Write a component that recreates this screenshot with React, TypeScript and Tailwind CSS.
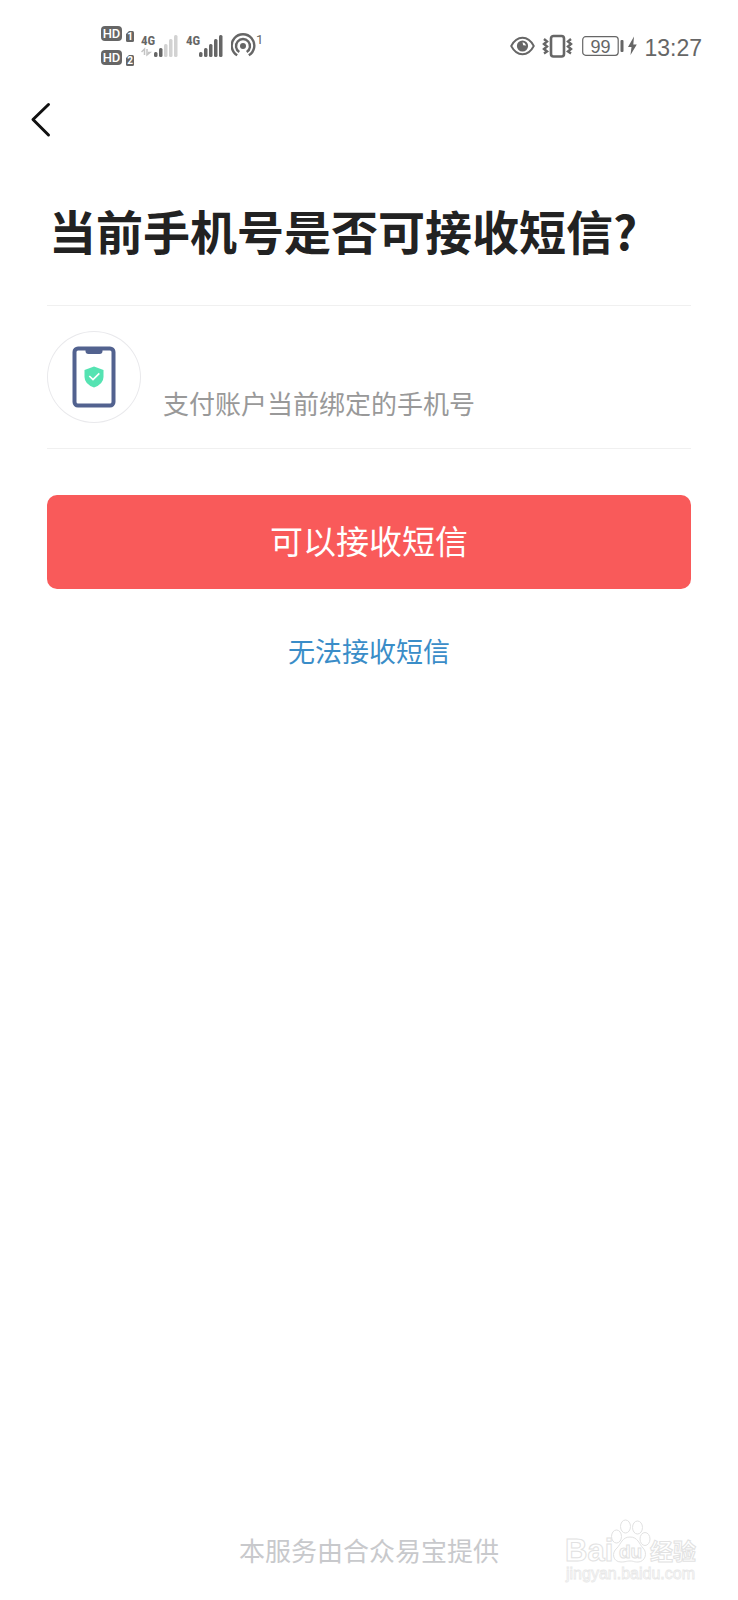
import React from "react";

const INK = "#666666";

function HdBadge({ sim }: { sim: string }) {
  return (
    <svg width="33" height="16" viewBox="0 0 33 16" role="img" aria-label={`HD ${sim}`}>
      <rect x="0" y="0" width="21" height="15" rx="4" fill={INK} />
      <text x="10.5" y="12" textAnchor="middle" fontSize="13" fontWeight="500" fontFamily="Roboto, sans-serif" fill="#fff">
        HD
      </text>
      <path d="M25 8 L28 5 H31.5 Q33 5 33 6.5 V14.5 Q33 16 31.5 16 H26.5 Q25 16 25 14.5 Z" fill={INK} />
      <text x="29" y="14" textAnchor="middle" fontSize="10" fontWeight="700" fontFamily="Roboto, sans-serif" fill="#fff">
        {sim}
      </text>
    </svg>
  );
}

function Signal({ strength, data }: { strength: number; data?: boolean }) {
  const heights = [5, 9, 13, 18, 22];
  return (
    <svg width="38" height="28" viewBox="0 0 38 28" role="img" aria-label="4G">
      <text x="0" y="13" fontSize="13" fontWeight="700" fontFamily="'Liberation Sans Narrow', 'Roboto Condensed', sans-serif" fill={INK}>
        4G
      </text>
      {data && (
        <path d="M0.5 20 L3.5 17 V23 M6 17 V23 L9 20.5 H7" fill="none" stroke="#c4c4c4" strokeWidth="1.5" />
      )}
      {heights.map((h, i) => (
        <rect key={h} x={13 + i * 5} y={25 - h} width="3.5" height={h} rx="1.5" fill={i < strength ? INK : "#d2d2d2"} />
      ))}
    </svg>
  );
}

function Hotspot() {
  return (
    <svg width="34" height="26" viewBox="0 0 34 26" role="img" aria-label="1">
      <circle cx="12" cy="13" r="3" fill={INK} />
      <path d="M8.3 19 A7 7 0 1 1 15.7 19" fill="none" stroke={INK} strokeWidth="2.4" />
      <path d="M6.2 22.3 A11.3 11.3 0 1 1 17.8 22.3" fill="none" stroke={INK} strokeWidth="2.4" />
      <text x="25" y="11" fontSize="13" fontFamily="Roboto, sans-serif" fill={INK}>
        1
      </text>
    </svg>
  );
}

function StatusBar() {
  return (
    <header className="flex h-[92px] items-center justify-between pl-[101px] pr-9">
      <div className="flex items-center gap-[7px]">
        <div className="flex flex-col gap-2">
          <HdBadge sim="1" />
          <HdBadge sim="2" />
        </div>
        <Signal strength={2} data />
        <Signal strength={5} />
        <Hotspot />
      </div>
      <div className="flex items-center gap-[7px]">
        <svg width="25" height="20" viewBox="0 0 25 20" aria-hidden="true">
          <path d="M1.2 10 C7 -1 18 -1 23.8 10 C18 21 7 21 1.2 10 Z" fill="none" stroke={INK} strokeWidth="1.9" strokeLinejoin="round" />
          <circle cx="12.5" cy="10" r="5.6" fill={INK} />
          <path d="M12.5 6.2 L13.2 9.2 L16.2 9.5 L14.5 7 Z" fill="#fff" />
        </svg>
        <svg width="31" height="24" viewBox="0 0 31 24" aria-hidden="true">
          <rect x="9" y="2" width="13" height="20.5" rx="2.5" fill="none" stroke={INK} strokeWidth="2.6" />
          <path d="M2 5 L5 7.5 L2 10 L5 12.5 L2 15 L5 17.5 L2 19.5 M29 5 L26 7.5 L29 10 L26 12.5 L29 15 L26 17.5 L29 19.5" fill="none" stroke={INK} strokeWidth="2.4" />
        </svg>
        <svg width="57" height="22" viewBox="0 0 57 22" role="img" aria-label="99">
          <rect x="2.7" y="1.7" width="35.5" height="18.6" rx="3" fill="none" stroke={INK} strokeWidth="1.2" />
          <text x="20.5" y="17.5" textAnchor="middle" fontSize="18" fontFamily="'Liberation Sans', sans-serif" fill={INK}>
            99
          </text>
          <rect x="40.5" y="5" width="3" height="12" rx="1" fill={INK} />
          <path d="M54 1.5 L48 12 H51.5 L50.5 20 L56.8 9.5 H53.3 Z" fill={INK} />
        </svg>
        <time className="pt-1 font-['Liberation_Sans',sans-serif] text-[23px] leading-6 text-[#666666]">13:27</time>
      </div>
    </header>
  );
}

function PhoneShield() {
  return (
    <svg width="44" height="62" viewBox="0 0 44 62" aria-hidden="true">
      <rect x="2.5" y="2.5" width="39" height="57" rx="3.5" fill="#fff" stroke="#52628f" strokeWidth="4" />
      <path d="M13.5 3 H30.5 V5 Q30.5 8 27.5 8 H16.5 Q13.5 8 13.5 5 Z" fill="#52628f" />
      <path d="M22 20.5 L31.5 24 V31 Q31.5 38 22 41.5 Q12.5 38 12.5 31 V24 Z" fill="#55e3b2" />
      <path d="M17.3 30 L21 33.5 L27.3 27.3" fill="none" stroke="#fff" strokeWidth="1.7" />
    </svg>
  );
}

function Watermark() {
  return (
    <svg className="absolute bottom-4 right-9" width="138" height="66" viewBox="0 0 138 66" role="img" aria-label="Baidu" fill="#fff" stroke="#e2e2e2" strokeWidth="1">
      <text x="1" y="43" fontSize="31" fontWeight="700" fontFamily="'Liberation Sans', sans-serif">
        Bai
      </text>
      <ellipse cx="52.5" cy="18.5" rx="5" ry="6.5" />
      <ellipse cx="61.5" cy="8.5" rx="5" ry="6.5" />
      <ellipse cx="73.5" cy="9.5" rx="5" ry="6.5" />
      <ellipse cx="81" cy="21" rx="5" ry="6.5" />
      <path d="M66 19 C74 19 75 26 79 30 C84 35 81 44 74 44 C69 44 70 43 66 43 C62 43 62 44 57 44 C49 44 47 35 53 30 C57 26 58 19 66 19 Z" />
      <text x="55" y="40" fontSize="19" fontWeight="700" fontFamily="'Liberation Sans', sans-serif">
        du
      </text>
      <text x="86" y="42" fontSize="23" fontWeight="700" fontFamily="'Noto Sans CJK SC', sans-serif">
        经验
      </text>
      <text x="2" y="61" fontSize="16" fontFamily="'Liberation Sans', sans-serif" stroke="#e8e8e8" strokeWidth="0.8">
        jingyan.baidu.com
      </text>
    </svg>
  );
}

export default function App() {
  return (
    <div className="relative flex min-h-screen flex-col bg-white font-['Noto_Sans_CJK_SC',sans-serif]">
      <StatusBar />
      <nav className="flex h-14 items-center pl-7">
        <button type="button" aria-label="返回" className="flex h-10 w-8 items-center">
          <svg width="26" height="36" viewBox="0 0 26 36" fill="none" stroke="#111" strokeWidth="3" strokeLinecap="round" strokeLinejoin="round">
            <path d="M20.5 2.5 L5 17.5 L20.5 33" />
          </svg>
        </button>
      </nav>
      <main className="flex flex-1 flex-col px-[47px]">
        <h1 className="mt-[52px] pl-[2px] text-[47px] font-bold leading-[60px] text-[#222222]">当前手机号是否可接收短信?</h1>
        <section className="mt-[45px] flex h-[144px] items-center border-y border-[#f0f0f0]">
          <div className="flex h-[92px] w-[94px] shrink-0 items-center justify-center rounded-[50%] border border-[#e9e9ec]">
            <PhoneShield />
          </div>
          <p className="ml-[22px] mt-[52px] text-[26px] leading-9 text-[#999999]">支付账户当前绑定的手机号</p>
        </section>
        <button type="button" className="mt-[46px] h-[94px] w-full rounded-[10px] bg-[#f95a5a] pb-1 text-[33px] leading-[48px] text-white">
          可以接收短信
        </button>
        <a href="#unavailable" className="mt-[42px] self-center text-[27px] leading-10 text-[#3a8dc8]">
          无法接收短信
        </a>
      </main>
      <footer className="pb-[30px] text-center text-[26px] leading-10 text-[#c8c9cc]">本服务由合众易宝提供</footer>
      <Watermark />
    </div>
  );
}
